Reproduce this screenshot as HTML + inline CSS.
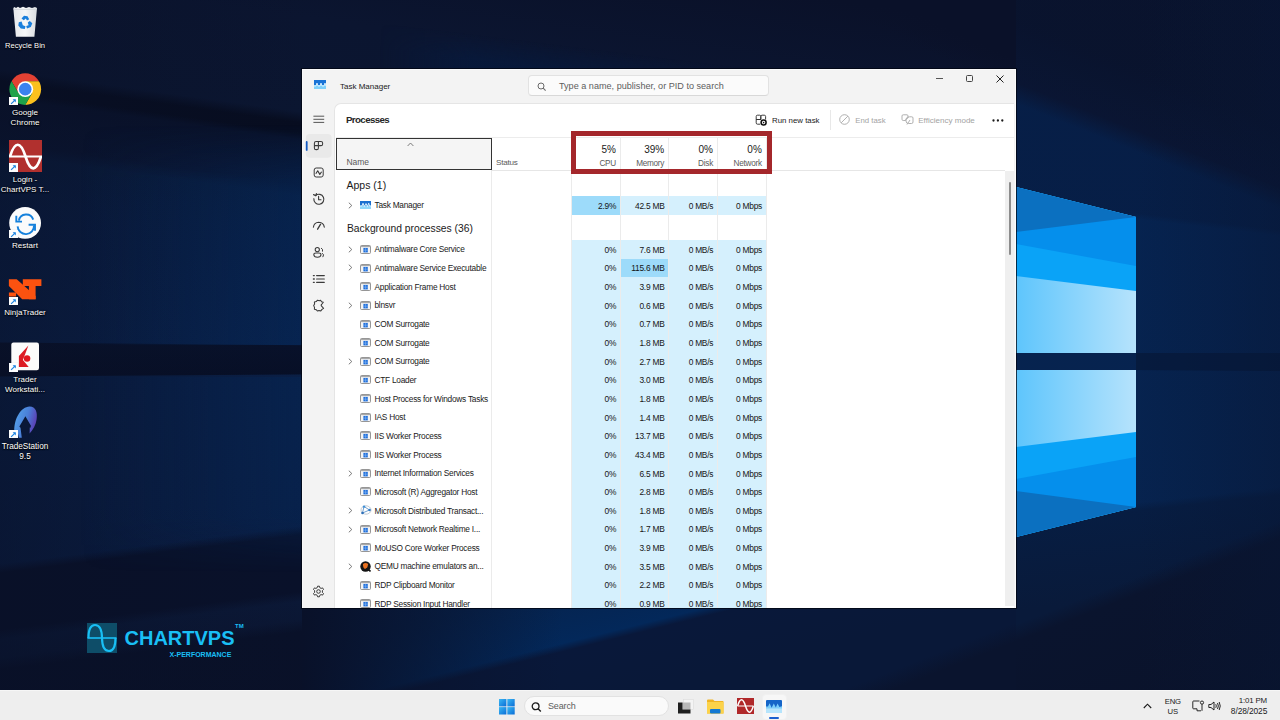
<!DOCTYPE html>
<html><head><meta charset="utf-8"><style>
*{margin:0;padding:0;box-sizing:border-box}
html,body{width:1280px;height:720px;overflow:hidden;background:#0a1430;font-family:"Liberation Sans",sans-serif}
.a{position:absolute;white-space:nowrap}
.dl{position:absolute;color:#fff;font-size:8px;text-align:center;width:60px;line-height:10px;text-shadow:0 0 2px rgba(0,0,0,.9),0 1px 1px #000}
.nm{position:absolute;font-size:8.3px;line-height:10px;color:#1a1a1a;white-space:nowrap;letter-spacing:-0.24px}
.c{position:absolute;font-size:8.4px;line-height:10px;text-align:right;color:#151515;white-space:nowrap;letter-spacing:-0.25px}
.hl{position:absolute}
</style></head>
<body>
<div class="a" style="left:0;top:0;width:1280px;height:690px;background:#0a1229"></div>
<div class="a" style="left:0px;top:0px;width:1016px;height:690px;background:linear-gradient(-172.082deg,#0a1129 25.1px,#0b1530 115.1px,#0b1631 209.1px,#070d20 220.1px,#070d20 230.1px,#09122b 237.1px,#0a1531 281.1px,#0a1c3d 293.1px,rgba(10,30,68,1) 385.1px,rgba(10,32,72,0) 465.1px)"></div>
<div class="a" style="left:0px;top:0px;width:1016px;height:690px;background:linear-gradient(-179.492deg,rgba(10,30,68,0) -248.0px,rgba(10,30,68,0) 182.0px,rgba(10,30,68,1) 262.0px,#0a2048 351.0px,#08112a 352.0px,#070f26 385.0px,rgba(7,15,38,0) 386.0px)"></div>
<div class="a" style="left:0px;top:0px;width:1016px;height:690px;background:linear-gradient(179.605deg,rgba(10,31,70,0) 376.0px,#0a1f46 377.0px,#0a1c40 677.0px)"></div>
<div class="a" style="left:0px;top:450px;width:302px;height:240px;background:linear-gradient(172.405deg,rgba(10,24,56,0) -176.1px,rgba(10,24,56,0) 120.9px,#0a1838 126.9px,#0a1735 163.9px)"></div>
<div class="a" style="left:0px;top:450px;width:302px;height:240px;background:linear-gradient(172.781deg,rgba(8,16,40,0) 113.1px,#09112a 122.1px,#09112a 178.1px,#0b1836 188.1px,#0b1734 206.1px,#091129 218.1px,#0a1128 316.1px)"></div>
<div class="a" style="left:0;top:0;width:310px;height:690px;background:linear-gradient(90deg,rgba(9,16,38,0.5) 0px,rgba(9,16,38,0.25) 150px,rgba(9,16,38,0) 310px)"></div>
<div class="a" style="left:0;top:110px;width:302px;height:235px;background:linear-gradient(90deg,rgba(4,42,92,0) 80px,rgba(4,42,92,0.45) 302px);-webkit-mask-image:linear-gradient(180deg,transparent 0,transparent 15px,#000 70px);mask-image:linear-gradient(180deg,transparent 0,transparent 15px,#000 70px)"></div>
<div class="a" style="left:0;top:377px;width:302px;height:200px;background:linear-gradient(90deg,rgba(4,42,92,0) 80px,rgba(4,42,92,0.35) 302px);-webkit-mask-image:linear-gradient(180deg,#000 0,#000 140px,transparent 195px);mask-image:linear-gradient(180deg,#000 0,#000 140px,transparent 195px)"></div>
<div class="a" style="left:380px;top:0px;width:636px;height:69px;background:linear-gradient(-172.936deg,rgba(6,28,66,0) 100.9px,rgba(6,28,66,0.55) 125.9px,rgba(6,28,66,0.6) 165.9px);-webkit-mask-image:linear-gradient(90deg,transparent 0,#000 90px);mask-image:linear-gradient(90deg,transparent 0,#000 90px)"></div>
<div class="a" style="left:380px;top:0px;width:636px;height:69px;background:linear-gradient(-154.799deg,#0a1129 -120.8px,#0a1129 54.2px,rgba(10,17,41,0) 84.2px)"></div>
<div class="a" style="left:302px;top:600px;width:714px;height:90px;background:linear-gradient(166.057deg,#0a1d42 -89.1px,#06234e 50.9px,#03285a 104.9px,#09183a 112.9px,#091838 170.9px)"></div>
<div class="a" style="left:302px;top:600px;width:714px;height:90px;background:linear-gradient(158.682deg,rgba(10,20,46,0) 280.3px,#0a142e 298.3px)"></div>
<div class="a" style="left:302px;top:600px;width:714px;height:90px;background:linear-gradient(90deg,rgba(9,17,41,1) 0px,rgba(9,18,43,0.6) 120px,rgba(10,24,56,0) 260px)"></div>
<div class="a" style="left:1016px;top:0px;width:264px;height:690px;background:linear-gradient(-158.311deg,#0a1129 -116.0px,#0a1229 114.0px,#0b1531 174.0px,#062350 194.0px,#07234e 684.0px)"></div>
<div class="a" style="left:1016px;top:0px;width:264px;height:690px;background:linear-gradient(-173.267deg,rgba(8,22,54,0.35) 31.4px,rgba(8,22,54,0.35) 228.4px,rgba(8,22,54,0) 234.4px)"></div>
<div class="a" style="left:1016px;top:0px;width:264px;height:690px;background:linear-gradient(173.660deg,rgba(7,27,64,0) 513.2px,#071d42 521.2px,#091a3a 607.2px)"></div>
<div class="a" style="left:1016px;top:0px;width:264px;height:690px;background:linear-gradient(158.682deg,rgba(10,18,41,0) 569.7px,rgba(10,18,41,0) 581.7px,#0a142e 597.7px,#0a1229 789.7px)"></div>
<div class="a" style="left:1016px;top:0;width:264px;height:690px;background:linear-gradient(90deg,rgba(6,20,50,0) 0,rgba(6,20,50,0) 120px,rgba(8,22,52,0.45) 264px)"></div>
<svg class="a" style="left:0;top:0" width="1280" height="720" viewBox="0 0 1280 720">
 <defs>
  <linearGradient id="paneT" x1="0" y1="0" x2="1" y2="0">
   <stop offset="0" stop-color="#5ec5fc"/>
   <stop offset="1" stop-color="#b6e3fc"/>
  </linearGradient>
 </defs>
 <polygon points="1136,353 1280,353 1280,371 1136,370" fill="#061533" opacity="0.6"/>
 <polygon points="1016,187 1136,217 1136,353 1016,353" fill="url(#paneT)"/>
 <polygon points="1016,187 1136,217 1136,291 1016,276" fill="#0aa3f7"/>
 <polygon points="1016,187 1136,217 1136,266 1016,244" fill="#058fec"/>
 <polygon points="1016,187 1136,217 1016,232" fill="#0b70c0"/>
 <polygon points="1016,370 1136,370 1136,507 1016,537" fill="url(#paneT)"/>
 <polygon points="1016,447 1136,432 1136,507 1016,537" fill="#0aa3f7"/>
 <polygon points="1016,479 1136,457 1136,507 1016,537" fill="#058fec"/>
 <polygon points="1016,491 1136,507 1016,537" fill="#0b70c0"/>
</svg>
<!-- Recycle bin -->
<svg class="a" style="left:0;top:0" width="50" height="40" viewBox="0 0 50 40">
 <defs><linearGradient id="rbg" x1="0" y1="0" x2="1" y2="0"><stop offset="0" stop-color="#e6e9ec"/><stop offset="0.5" stop-color="#f6f7f8"/><stop offset="1" stop-color="#d8dce0"/></linearGradient></defs>
 <path d="M13.3 8 L14.5 7 L16 8 L18 6.8 L20 8 L23 6.8 L26 8 L29 7 L32 8 L35 7 L37 8 L34.4 36.8 L15.9 36.8 Z" fill="url(#rbg)"/>
 <path d="M13.5 9.5 H36.8" stroke="#c9ced3" stroke-width="0.6"/>
 <g fill="#1a7fdc">
  <path d="M21.5 18.5 L24 15.8 L27.5 16.2 L29.2 19.2 L27 20.6 L25.8 18.4 L23.8 20.3 Z"/>
  <path d="M29.8 21 L32.3 23.2 L30.8 27 L27 28.6 L26.2 26 L28.6 25.2 L27.8 22.6 Z"/>
  <path d="M18.8 22.2 L21.6 21.5 L22.8 25.2 L25.5 26.2 L24.8 29 L20.8 28.6 L18.3 25.5 Z"/>
 </g>
</svg>
<div class="dl" style="left:-5px;top:40.5px;font-size:7.6px">Recycle Bin</div>

<!-- Chrome -->
<svg class="a" style="left:9px;top:73px" width="33" height="33" viewBox="0 0 33 33">
 <defs><clipPath id="chc"><circle cx="16.25" cy="16.15" r="15.85"/></clipPath></defs>
 <g clip-path="url(#chc)">
  <polygon points="9.41,20.10 -10.59,-14.54 -23.75,-23.85 56.25,-23.85 56.25,8.25 16.25,8.25 16.25,16.15" fill="#e34133"/>
  <polygon points="16.25,8.25 56.25,8.25 56.25,56.15 3.09,54.74 23.09,20.10 16.25,16.15" fill="#fbc11d"/>
  <polygon points="23.09,20.10 3.09,54.74 -23.75,56.15 -10.59,-14.54 9.41,20.10 16.25,16.15" fill="#1fa34a"/>
 </g>
 <circle cx="16.25" cy="16.15" r="7.9" fill="#fff"/>
 <circle cx="16.25" cy="16.15" r="6.3" fill="#3b82ee"/>
</svg>
<div class="a" style="left:9.4px;top:96.6px;width:8.5px;height:8.4px;background:#fdfdfd;box-shadow:0 0 0.6px rgba(0,0,0,.4)"></div>
<svg class="a" style="left:10.2px;top:97.5px" width="7" height="7" viewBox="0 0 7 7"><path d="M1.1 5.9 L5.2 1.8" stroke="#1b83e0" stroke-width="1.15"/><path d="M2.6 1.2 H5.8 V4.4 Z" fill="#1b83e0"/></svg>
<div class="dl" style="left:-5px;top:107.5px;font-size:8.1px">Google<br>Chrome</div>

<!-- ChartVPS login -->
<svg class="a" style="left:9px;top:140px" width="33" height="32" viewBox="0 0 33 32">
 <rect width="33" height="32" fill="#b1302e"/>
 <path d="M1 16.5 C5.8 0.8 11.6 0.8 16.5 16.5 C21.4 32.2 27.2 32.2 32 16.5" stroke="#fff" stroke-width="2.7" fill="none"/>
 <path d="M0 16.5 H33" stroke="#fff" stroke-width="1.8"/>
</svg>
<div class="a" style="left:9.2px;top:163.3px;width:8.5px;height:8.4px;background:#fdfdfd;box-shadow:0 0 0.6px rgba(0,0,0,.4)"></div>
<svg class="a" style="left:10.0px;top:164.2px" width="7" height="7" viewBox="0 0 7 7"><path d="M1.1 5.9 L5.2 1.8" stroke="#1b83e0" stroke-width="1.15"/><path d="M2.6 1.2 H5.8 V4.4 Z" fill="#1b83e0"/></svg>
<div class="dl" style="left:-5px;top:174.5px;font-size:8px">Login -<br>ChartVPS T...</div>

<!-- Restart -->
<svg class="a" style="left:9px;top:206.5px" width="33" height="33" viewBox="0 0 33 33">
 <circle cx="16.1" cy="15.9" r="15.9" fill="#fbfbfb"/>
 <g stroke="#1581dc" stroke-width="1.9" fill="none" stroke-linecap="butt">
  <path d="M9.9 13.6 A7.4 7.4 0 0 1 24.2 12.6"/>
  <path d="M7.3 8.8 V14.6 H13"/>
  <path d="M8.6 19.4 A7.4 7.4 0 0 0 25 18.4"/>
  <path d="M19.6 17.7 H26 V23.8"/>
 </g>
</svg>
<div class="a" style="left:9.2px;top:230px;width:8.5px;height:8.4px;background:#fdfdfd;box-shadow:0 0 0.6px rgba(0,0,0,.4)"></div>
<svg class="a" style="left:10.0px;top:230.9px" width="7" height="7" viewBox="0 0 7 7"><path d="M1.1 5.9 L5.2 1.8" stroke="#1b83e0" stroke-width="1.15"/><path d="M2.6 1.2 H5.8 V4.4 Z" fill="#1b83e0"/></svg>
<div class="dl" style="left:-5px;top:240.5px;font-size:8px">Restart</div>

<!-- NinjaTrader -->
<svg class="a" style="left:0;top:270px" width="50" height="40" viewBox="0 270 50 40">
 <g fill="#fb5210">
  <polygon points="8.9,279.2 16.7,279.2 35.6,296.1 35.6,299.2 22.2,299.2 8.9,286.1"/>
  <polygon points="22.8,279.2 41.4,279.2 41.4,286.1 35.6,286.1 35.6,299.2 28.9,299.2 28.9,286.1 22.8,286.1"/>
  <rect x="8.9" y="292.5" width="7.2" height="4"/>
 </g>
</svg>
<div class="a" style="left:9px;top:296.7px;width:8.5px;height:8.4px;background:#fdfdfd;box-shadow:0 0 0.6px rgba(0,0,0,.4)"></div>
<svg class="a" style="left:9.8px;top:297.6px" width="7" height="7" viewBox="0 0 7 7"><path d="M1.1 5.9 L5.2 1.8" stroke="#1b83e0" stroke-width="1.15"/><path d="M2.6 1.2 H5.8 V4.4 Z" fill="#1b83e0"/></svg>
<div class="dl" style="left:-5px;top:307.5px;font-size:8px">NinjaTrader</div>

<!-- Trader Workstation -->
<svg class="a" style="left:11px;top:341.5px" width="29" height="29" viewBox="0 0 29 29">
 <rect x="0.3" y="0.5" width="27.7" height="27.7" rx="2.2" fill="#fbfbfb"/>
 <polygon points="17.4,3.4 7.9,13.9 7.9,25 17.7,25 11.9,18.1" fill="#dc1b24"/>
 <circle cx="16.1" cy="16.5" r="3.2" fill="#e0141e"/>
</svg>
<div class="a" style="left:9.4px;top:363.3px;width:8.5px;height:8.4px;background:#fdfdfd;box-shadow:0 0 0.6px rgba(0,0,0,.4)"></div>
<svg class="a" style="left:10.2px;top:364.2px" width="7" height="7" viewBox="0 0 7 7"><path d="M1.1 5.9 L5.2 1.8" stroke="#1b83e0" stroke-width="1.15"/><path d="M2.6 1.2 H5.8 V4.4 Z" fill="#1b83e0"/></svg>
<div class="dl" style="left:-5px;top:374.5px;font-size:8px">Trader<br>Workstati...</div>

<!-- TradeStation -->
<svg class="a" style="left:0;top:400px" width="50" height="42" viewBox="0 400 50 42">
 <defs><linearGradient id="ts" x1="0" y1="0" x2="1" y2="0.4"><stop offset="0" stop-color="#56a9ef"/><stop offset="0.6" stop-color="#4a7fd8"/><stop offset="1" stop-color="#5b3fb4"/></linearGradient></defs>
 <path d="M14.3 431.5 C14 418 21 407 29.5 406.5 C35.5 406.3 37.8 412 36.6 419.5 C35.8 425 33 430 29.6 433.5 L29.8 427 L31.2 426.2 L25.4 416.2 L19.2 426.8 L20.4 427 L21.8 437.8 L18.8 437.8 L17.6 431.5 Z" fill="url(#ts)"/>
 <path d="M25.4 418.5 L19.8 427.5 L22 427.5 L22 441 L28.8 441 L28.8 427.5 L31 427.5 Z" fill="#0a1838"/>
</svg>
<div class="a" style="left:9.3px;top:430px;width:8.5px;height:8.4px;background:#fdfdfd;box-shadow:0 0 0.6px rgba(0,0,0,.4)"></div>
<svg class="a" style="left:10.1px;top:430.9px" width="7" height="7" viewBox="0 0 7 7"><path d="M1.1 5.9 L5.2 1.8" stroke="#1b83e0" stroke-width="1.15"/><path d="M2.6 1.2 H5.8 V4.4 Z" fill="#1b83e0"/></svg>
<div class="dl" style="left:-5px;top:441.5px;font-size:8.2px">TradeStation<br>9.5</div>

<!-- ChartVPS logo -->
<svg class="a" style="left:87px;top:623px" width="30" height="30" viewBox="0 0 30 30">
 <rect width="30" height="30" fill="#0e4d68"/>
 <path d="M1.5 15 Q1.5 2 8 2 Q14.8 2 15 15 Q15.2 28 22 28 Q28.5 28 28.5 15" stroke="#19bff5" stroke-width="2.2" fill="none"/>
 <path d="M0.5 15 H29.5" stroke="#19bff5" stroke-width="1.6"/>
</svg>
<div class="a" style="left:124.5px;top:626px;font-size:20px;line-height:24px;font-weight:bold;color:#19bff5;letter-spacing:0px">CHARTVPS</div>
<div class="a" style="left:235px;top:623px;font-size:6px;line-height:7px;font-weight:bold;color:#19bff5">TM</div>
<div class="a" style="left:169.5px;top:650.5px;font-size:7px;line-height:8px;font-weight:bold;color:#19bff5">X-PERFORMANCE</div>

<div style="position:absolute;left:0;top:0;width:1280px;height:608px;overflow:hidden">
<div class="a" style="left:302px;top:69px;width:714px;height:539px;background:#f3f3f3;border-left:1px solid #f7f7f7;border-right:1px solid #fafafa;border-top:1px solid #fafafa;box-shadow:0 0 0 1px rgba(0,4,16,0.75)"></div><div class="a" style="left:334px;top:103px;width:680px;height:505px;background:#fff;border-top-left-radius:7px;border-left:1px solid #e5e5e5;border-top:1px solid #e5e5e5"></div><svg class="a" style="left:314px;top:80px" width="12" height="9" viewBox="0 0 12 9">
<rect x="0" y="0" width="12" height="9" fill="#1a73d6"/>
<rect x="0" y="5" width="12" height="4" fill="#7fd0fb"/>
<path d="M0 6 L2 6 L3 3 L4 6 L6 6 L7 3 L8 6 L10 6 L11 3 L12 6" stroke="#dff4ff" stroke-width="0.9" fill="none"/>
</svg><div class="a" style="left:340px;top:82px;font-size:8px;line-height:10px;color:#1a1a1a">Task Manager</div><div class="a" style="left:528px;top:75px;width:241px;height:21px;background:#fbfbfb;border:1px solid #e2e2e2;border-bottom-color:#d8d8d8;border-radius:4px"></div><svg class="a" style="left:537px;top:82px" width="10" height="10" viewBox="0 0 10 10">
<circle cx="4" cy="4" r="3" stroke="#6a6a6a" stroke-width="1" fill="none"/><path d="M6.2 6.2 L8.6 8.6" stroke="#6a6a6a" stroke-width="1.1"/></svg><div class="a" style="left:559px;top:80.5px;font-size:9.1px;line-height:11px;color:#5d5d5d">Type a name, publisher, or PID to search</div><div class="a" style="left:936px;top:78px;width:7px;height:1px;background:#555"></div><div class="a" style="left:966px;top:75px;width:7px;height:7px;border:1px solid #444;border-radius:1.5px"></div><svg class="a" style="left:996px;top:75px" width="8" height="8" viewBox="0 0 8 8"><path d="M0.5 0.5 L7.5 7.5 M7.5 0.5 L0.5 7.5" stroke="#222" stroke-width="1"/></svg><svg class="a" style="left:305px;top:108px" width="28" height="210" viewBox="305 108 28 210">
 <g stroke="#4d4d4d" stroke-width="0.95" fill="none" stroke-linecap="round">
  <!-- hamburger -->
  <path d="M313.8 116.2 H323.8 M313.8 119.3 H323.8 M313.8 122.4 H323.8"/>
 </g>
 <rect x="305.8" y="134" width="25.8" height="23.8" rx="4" fill="#e9e9e9"/>
 <rect x="305.8" y="141" width="1.8" height="9.8" rx="0.9" fill="#1259c3"/>
 <g stroke="#3a3a3a" stroke-width="1" fill="none" stroke-linejoin="round">
  <!-- processes -->
  <path d="M314.4 143.2 Q314.4 141.5 316.1 141.5 H321 Q322.6 141.5 322.6 143.1 V143.9 Q322.6 145.6 321 145.6 H318.4 V147.9 Q318.4 149.6 316.7 149.6 H316.1 Q314.4 149.6 314.4 147.9 Z" stroke-width="1.05"/>
  <path d="M314.4 145.6 H318.4 M318.4 141.5 V145.6" stroke-width="1.05"/>
  <!-- performance -->
  <rect x="314.2" y="168" width="9" height="9" rx="2"/>
  <path d="M315.8 173.8 L317.7 170.8 L319.8 174.4 L321.6 171.8" stroke-width="1.1"/>
 </g>
 <g stroke="#3a3a3a" stroke-width="1" fill="none" stroke-linecap="round" stroke-linejoin="round">
  <!-- app history -->
  <path d="M313.9 198.7 A5 5 0 1 0 315.6 195.5" stroke-width="1.15"/>
  <path d="M313.6 194.6 L315.8 195.8 L316.4 193.6" stroke-width="1.2"/>
  <path d="M318.6 196.4 V199.8 H321" stroke-width="1.1"/>
  <!-- startup (gauge) -->
  <path d="M313.4 227.2 Q314 222.3 318.8 222.2 Q323.6 222.3 324.3 227.2" stroke-width="1.1"/>
  <path d="M320.6 224.2 L317.6 229.2" stroke-width="1.3"/>
  <!-- users -->
  <circle cx="317.3" cy="249.6" r="2.1" stroke-width="1.05"/>
  <path d="M313.8 254.8 Q313.8 253 316 253 H318.8 Q321 253 321 254.8 Q320.8 257.2 317.4 257.2 Q314 257.2 313.8 254.8 Z" stroke-width="1.05"/>
  <path d="M321.4 248.2 Q323.2 249 322.6 251.2" stroke-width="1"/>
  <path d="M322.6 253.4 Q324.6 254.5 323 256.8" stroke-width="1"/>
  <!-- details (list) -->
  <path d="M316.6 275.6 H324.3 M316.6 279 H324.3 M316.6 282.3 H324.3" stroke-width="1.2"/>
  <path d="M313.4 275.6 H314.3 M313.4 279 H314.3 M313.4 282.3 H314.3" stroke-width="1.3"/>
  <!-- services -->
  <path d="M317.5 300.2 L319.3 300.8 L320.6 300.3 L321.5 301.8 L323.3 302.3 L321.6 304.5 Q320.7 305.3 321.6 306.2 L323.6 308.4 L322 309.4 L320.8 310.9 L319 310.5 L317.4 311 L316.2 309.7 L314.4 309.2 L314.5 307.4 L313.7 305.6 L314.6 304 L314.4 302.1 L316.2 301.6 Z" stroke-width="1.05"/>
 </g>
</svg>
<svg class="a" style="left:312px;top:585px" width="13" height="13" viewBox="0 0 13 13">
 <g fill="none" stroke="#3a3a3a" stroke-width="1">
  <circle cx="6.5" cy="6.5" r="1.8"/>
  <path d="M5.6 1.2 H7.4 L7.8 2.7 L9.1 3.4 L10.6 2.9 L11.5 4.5 L10.4 5.6 V7.4 L11.5 8.5 L10.6 10.1 L9.1 9.6 L7.8 10.3 L7.4 11.8 H5.6 L5.2 10.3 L3.9 9.6 L2.4 10.1 L1.5 8.5 L2.6 7.4 V5.6 L1.5 4.5 L2.4 2.9 L3.9 3.4 L5.2 2.7 Z" stroke-linejoin="round"/>
 </g>
</svg>
<div class="a" style="left:346px;top:114px;font-size:9.7px;line-height:11px;color:#262626;font-weight:bold;letter-spacing:-0.6px">Processes</div><svg class="a" style="left:755px;top:114px" width="13" height="12" viewBox="0 0 13 12">
 <g fill="none" stroke="#333" stroke-width="0.95">
  <path d="M1.2 5.5 V2.5 Q1.2 1.2 2.5 1.2 H4.7 Q5.8 1.2 5.8 2.5 V5.5 Z"/>
  <path d="M5.8 5.5 V2.5 Q5.8 1.2 7.1 1.2 H9.3 Q10.6 1.2 10.6 2.5 V5.5"/>
  <path d="M1.2 5.5 V8.8 Q1.2 10.2 2.5 10.2 H5.2"/>
  <path d="M1.2 5.5 H5.8"/>
 </g>
 <circle cx="8.6" cy="8.6" r="2.5" fill="#fff" stroke="#111" stroke-width="1.5"/>
 <circle cx="8.6" cy="8.6" r="0.8" fill="#111"/>
</svg>
<div class="a" style="left:772px;top:116px;font-size:7.85px;line-height:10px;color:#1a1a1a">Run new task</div>
<div class="a" style="left:829.5px;top:110px;width:1px;height:20px;background:#e8e8e8"></div>
<svg class="a" style="left:838.5px;top:114px" width="11" height="11" viewBox="0 0 11 11">
 <circle cx="5.5" cy="5.5" r="4.8" fill="none" stroke="#a8a8a8" stroke-width="0.9"/>
 <path d="M2.2 8.8 L8.8 2.2" stroke="#a8a8a8" stroke-width="0.9"/>
</svg>
<div class="a" style="left:855.3px;top:116px;font-size:7.8px;line-height:10px;color:#a3a3a3">End task</div>
<svg class="a" style="left:901px;top:114px" width="13" height="11" viewBox="0 0 13 11">
 <g fill="none" stroke="#a8a8a8" stroke-width="0.9" stroke-linejoin="round">
  <path d="M1 2 Q1 0.8 2.2 0.8 H6 Q7 0.8 7 2 V4 Q5 4.5 4.5 6.5 H2.2 Q1 6.5 1 5.3 Z"/>
  <path d="M5 5 Q5.5 2.8 8.5 2.8 H10.8 Q12 2.8 12 4 V8 Q12 9.5 10.5 9.5 H7.5 Q5 9.5 5 7 Z"/>
  <path d="M6 10.5 L9 6"/>
 </g>
</svg>
<div class="a" style="left:918.2px;top:116px;font-size:8.05px;line-height:10px;color:#a3a3a3">Efficiency mode</div>
<svg class="a" style="left:992px;top:119px" width="12" height="3" viewBox="0 0 12 3">
 <circle cx="1.5" cy="1.5" r="1.15" fill="#1a1a1a"/><circle cx="5.9" cy="1.5" r="1.15" fill="#1a1a1a"/><circle cx="10.3" cy="1.5" r="1.15" fill="#1a1a1a"/>
</svg>
<div class="a" style="left:336px;top:137px;width:678px;height:1px;background:#ececec"></div><div class="a" style="left:491px;top:170px;width:514px;height:1px;background:#e6e6e6"></div><div class="a" style="left:336px;top:138px;width:156px;height:32px;background:#f5f5f5;border:1.5px solid #333"></div><svg class="a" style="left:407px;top:142px" width="7" height="5" viewBox="0 0 7 5"><path d="M0.6 4 L3.5 1 L6.4 4" stroke="#6d6d6d" stroke-width="0.9" fill="none"/></svg><div class="a" style="left:346.5px;top:156.8px;font-size:8.5px;line-height:10px;color:#5a5a5a;letter-spacing:-0.1px">Name</div><div class="a" style="left:496px;top:158.2px;font-size:8.1px;line-height:10px;color:#5a5a5a;letter-spacing:-0.25px">Status</div><div class="a" style="right:664.0px;top:143.5px;font-size:10px;line-height:12px;color:#1a1a1a;text-align:right">5%</div><div class="a" style="right:664.0px;top:158.6px;font-size:8.2px;line-height:10px;color:#5a5a5a;text-align:right;letter-spacing:-0.25px">CPU</div><div class="a" style="right:615.8px;top:143.5px;font-size:10px;line-height:12px;color:#1a1a1a;text-align:right">39%</div><div class="a" style="right:615.8px;top:158.6px;font-size:8.2px;line-height:10px;color:#5a5a5a;text-align:right;letter-spacing:-0.25px">Memory</div><div class="a" style="right:567.0px;top:143.5px;font-size:10px;line-height:12px;color:#1a1a1a;text-align:right">0%</div><div class="a" style="right:567.0px;top:158.6px;font-size:8.2px;line-height:10px;color:#5a5a5a;text-align:right;letter-spacing:-0.25px">Disk</div><div class="a" style="right:518.2px;top:143.5px;font-size:10px;line-height:12px;color:#1a1a1a;text-align:right">0%</div><div class="a" style="right:518.2px;top:158.6px;font-size:8.2px;line-height:10px;color:#5a5a5a;text-align:right;letter-spacing:-0.25px">Network</div><div class="a" style="left:491.1px;top:171px;width:1px;height:437px;background:#ebebeb"></div><div class="a" style="left:571.2px;top:171px;width:1px;height:437px;background:#ebebeb"></div><div class="a" style="left:620.0px;top:138px;width:1px;height:470px;background:#ebebeb"></div><div class="a" style="left:668.2px;top:138px;width:1px;height:470px;background:#ebebeb"></div><div class="a" style="left:717.0px;top:138px;width:1px;height:470px;background:#ebebeb"></div><div class="a" style="left:765.8px;top:138px;width:1px;height:470px;background:#ebebeb"></div><div class="a" style="left:346.5px;top:179px;font-size:10.5px;line-height:12px;color:#1a1a1a">Apps (1)</div><div class="a" style="left:572.2px;top:196px;width:47.8px;height:19px;background:#9ddbfa"></div><div class="c" style="right:663.8px;top:200.72px">2.9%</div><div class="a" style="left:621.0px;top:196px;width:47.2px;height:19px;background:#d5f0fd"></div><div class="c" style="right:615.5px;top:200.72px">42.5 MB</div><div class="a" style="left:669.2px;top:196px;width:47.8px;height:19px;background:#d5f0fd"></div><div class="c" style="right:566.8px;top:200.72px">0 MB/s</div><div class="a" style="left:718.0px;top:196px;width:47.8px;height:19px;background:#d5f0fd"></div><div class="c" style="right:518.0px;top:200.72px">0 Mbps</div><svg class="a" style="left:348px;top:201.82px" width="5" height="7" viewBox="0 0 5 7"><path d="M0.8 0.7 L3.8 3.5 L0.8 6.3" stroke="#6a6a6a" stroke-width="0.9" fill="none"/></svg><svg class="a" style="left:360px;top:201.32px" width="11" height="8" viewBox="0 0 11 8"><rect width="11" height="8" fill="#1a6fd0"/><rect y="4.6" width="11" height="3.4" fill="#8fd6fb"/><path d="M0 5 L2 5 L3 2.2 L4.3 5.5 L6 2.5 L7.5 5.5 L8.7 2.2 L9.6 5 L11 5" stroke="#e6f6ff" stroke-width="0.9" fill="none"/></svg><div class="nm" style="left:374.5px;top:200.42px">Task Manager</div><div class="a" style="left:347px;top:223px;font-size:10.3px;line-height:12px;color:#1a1a1a">Background processes (36)</div><div class="a" style="left:572.2px;top:240px;width:47.8px;height:19px;background:#d5f0fd"></div><div class="c" style="right:663.8px;top:244.72px">0%</div><div class="a" style="left:621.0px;top:240px;width:47.2px;height:19px;background:#d5f0fd"></div><div class="c" style="right:615.5px;top:244.72px">7.6 MB</div><div class="a" style="left:669.2px;top:240px;width:47.8px;height:19px;background:#d5f0fd"></div><div class="c" style="right:566.8px;top:244.72px">0 MB/s</div><div class="a" style="left:718.0px;top:240px;width:47.8px;height:19px;background:#d5f0fd"></div><div class="c" style="right:518.0px;top:244.72px">0 Mbps</div><svg class="a" style="left:348px;top:245.82px" width="5" height="7" viewBox="0 0 5 7"><path d="M0.8 0.7 L3.8 3.5 L0.8 6.3" stroke="#6a6a6a" stroke-width="0.9" fill="none"/></svg><svg class="a" style="left:359.5px;top:244.92px" width="11" height="9" viewBox="0 0 11 9"><rect x="0.5" y="0.5" width="10" height="8" rx="1" fill="#f4f4f4" stroke="#8a8a8a" stroke-width="0.9"/><rect x="1" y="1" width="9" height="1.1" fill="#a8a8a8"/><rect x="3.4" y="2.9" width="4.4" height="4.5" fill="#1f6fdc"/><path d="M5.6 2.9 V7.4 M3.4 5.15 H7.8" stroke="#9cc4f2" stroke-width="0.5"/></svg><div class="nm" style="left:374.5px;top:244.42px">Antimalware Core Service</div><div class="a" style="left:572.2px;top:259px;width:47.8px;height:18px;background:#d5f0fd"></div><div class="c" style="right:663.8px;top:263.37px">0%</div><div class="a" style="left:621.0px;top:259px;width:47.2px;height:18px;background:#9ddbfa"></div><div class="c" style="right:615.5px;top:263.37px">115.6 MB</div><div class="a" style="left:669.2px;top:259px;width:47.8px;height:18px;background:#d5f0fd"></div><div class="c" style="right:566.8px;top:263.37px">0 MB/s</div><div class="a" style="left:718.0px;top:259px;width:47.8px;height:18px;background:#d5f0fd"></div><div class="c" style="right:518.0px;top:263.37px">0 Mbps</div><svg class="a" style="left:348px;top:264.47px" width="5" height="7" viewBox="0 0 5 7"><path d="M0.8 0.7 L3.8 3.5 L0.8 6.3" stroke="#6a6a6a" stroke-width="0.9" fill="none"/></svg><svg class="a" style="left:359.5px;top:263.57px" width="11" height="9" viewBox="0 0 11 9"><rect x="0.5" y="0.5" width="10" height="8" rx="1" fill="#f4f4f4" stroke="#8a8a8a" stroke-width="0.9"/><rect x="1" y="1" width="9" height="1.1" fill="#a8a8a8"/><rect x="3.4" y="2.9" width="4.4" height="4.5" fill="#1f6fdc"/><path d="M5.6 2.9 V7.4 M3.4 5.15 H7.8" stroke="#9cc4f2" stroke-width="0.5"/></svg><div class="nm" style="left:374.5px;top:263.07px">Antimalware Service Executable</div><div class="a" style="left:572.2px;top:277px;width:47.8px;height:19px;background:#d5f0fd"></div><div class="c" style="right:663.8px;top:282.02px">0%</div><div class="a" style="left:621.0px;top:277px;width:47.2px;height:19px;background:#d5f0fd"></div><div class="c" style="right:615.5px;top:282.02px">3.9 MB</div><div class="a" style="left:669.2px;top:277px;width:47.8px;height:19px;background:#d5f0fd"></div><div class="c" style="right:566.8px;top:282.02px">0 MB/s</div><div class="a" style="left:718.0px;top:277px;width:47.8px;height:19px;background:#d5f0fd"></div><div class="c" style="right:518.0px;top:282.02px">0 Mbps</div><svg class="a" style="left:359.5px;top:282.23px" width="11" height="9" viewBox="0 0 11 9"><rect x="0.5" y="0.5" width="10" height="8" rx="1" fill="#f4f4f4" stroke="#8a8a8a" stroke-width="0.9"/><rect x="1" y="1" width="9" height="1.1" fill="#a8a8a8"/><rect x="3.4" y="2.9" width="4.4" height="4.5" fill="#1f6fdc"/><path d="M5.6 2.9 V7.4 M3.4 5.15 H7.8" stroke="#9cc4f2" stroke-width="0.5"/></svg><div class="nm" style="left:374.5px;top:281.73px">Application Frame Host</div><div class="a" style="left:572.2px;top:296px;width:47.8px;height:19px;background:#d5f0fd"></div><div class="c" style="right:663.8px;top:300.67px">0%</div><div class="a" style="left:621.0px;top:296px;width:47.2px;height:19px;background:#d5f0fd"></div><div class="c" style="right:615.5px;top:300.67px">0.6 MB</div><div class="a" style="left:669.2px;top:296px;width:47.8px;height:19px;background:#d5f0fd"></div><div class="c" style="right:566.8px;top:300.67px">0 MB/s</div><div class="a" style="left:718.0px;top:296px;width:47.8px;height:19px;background:#d5f0fd"></div><div class="c" style="right:518.0px;top:300.67px">0 Mbps</div><svg class="a" style="left:348px;top:301.77px" width="5" height="7" viewBox="0 0 5 7"><path d="M0.8 0.7 L3.8 3.5 L0.8 6.3" stroke="#6a6a6a" stroke-width="0.9" fill="none"/></svg><svg class="a" style="left:359.5px;top:300.88px" width="11" height="9" viewBox="0 0 11 9"><rect x="0.5" y="0.5" width="10" height="8" rx="1" fill="#f4f4f4" stroke="#8a8a8a" stroke-width="0.9"/><rect x="1" y="1" width="9" height="1.1" fill="#a8a8a8"/><rect x="3.4" y="2.9" width="4.4" height="4.5" fill="#1f6fdc"/><path d="M5.6 2.9 V7.4 M3.4 5.15 H7.8" stroke="#9cc4f2" stroke-width="0.5"/></svg><div class="nm" style="left:374.5px;top:300.38px">blnsvr</div><div class="a" style="left:572.2px;top:315px;width:47.8px;height:18px;background:#d5f0fd"></div><div class="c" style="right:663.8px;top:319.32px">0%</div><div class="a" style="left:621.0px;top:315px;width:47.2px;height:18px;background:#d5f0fd"></div><div class="c" style="right:615.5px;top:319.32px">0.7 MB</div><div class="a" style="left:669.2px;top:315px;width:47.8px;height:18px;background:#d5f0fd"></div><div class="c" style="right:566.8px;top:319.32px">0 MB/s</div><div class="a" style="left:718.0px;top:315px;width:47.8px;height:18px;background:#d5f0fd"></div><div class="c" style="right:518.0px;top:319.32px">0 Mbps</div><svg class="a" style="left:359.5px;top:319.53px" width="11" height="9" viewBox="0 0 11 9"><rect x="0.5" y="0.5" width="10" height="8" rx="1" fill="#f4f4f4" stroke="#8a8a8a" stroke-width="0.9"/><rect x="1" y="1" width="9" height="1.1" fill="#a8a8a8"/><rect x="3.4" y="2.9" width="4.4" height="4.5" fill="#1f6fdc"/><path d="M5.6 2.9 V7.4 M3.4 5.15 H7.8" stroke="#9cc4f2" stroke-width="0.5"/></svg><div class="nm" style="left:374.5px;top:319.03px">COM Surrogate</div><div class="a" style="left:572.2px;top:333px;width:47.8px;height:19px;background:#d5f0fd"></div><div class="c" style="right:663.8px;top:337.97px">0%</div><div class="a" style="left:621.0px;top:333px;width:47.2px;height:19px;background:#d5f0fd"></div><div class="c" style="right:615.5px;top:337.97px">1.8 MB</div><div class="a" style="left:669.2px;top:333px;width:47.8px;height:19px;background:#d5f0fd"></div><div class="c" style="right:566.8px;top:337.97px">0 MB/s</div><div class="a" style="left:718.0px;top:333px;width:47.8px;height:19px;background:#d5f0fd"></div><div class="c" style="right:518.0px;top:337.97px">0 Mbps</div><svg class="a" style="left:359.5px;top:338.18px" width="11" height="9" viewBox="0 0 11 9"><rect x="0.5" y="0.5" width="10" height="8" rx="1" fill="#f4f4f4" stroke="#8a8a8a" stroke-width="0.9"/><rect x="1" y="1" width="9" height="1.1" fill="#a8a8a8"/><rect x="3.4" y="2.9" width="4.4" height="4.5" fill="#1f6fdc"/><path d="M5.6 2.9 V7.4 M3.4 5.15 H7.8" stroke="#9cc4f2" stroke-width="0.5"/></svg><div class="nm" style="left:374.5px;top:337.68px">COM Surrogate</div><div class="a" style="left:572.2px;top:352px;width:47.8px;height:19px;background:#d5f0fd"></div><div class="c" style="right:663.8px;top:356.62px">0%</div><div class="a" style="left:621.0px;top:352px;width:47.2px;height:19px;background:#d5f0fd"></div><div class="c" style="right:615.5px;top:356.62px">2.7 MB</div><div class="a" style="left:669.2px;top:352px;width:47.8px;height:19px;background:#d5f0fd"></div><div class="c" style="right:566.8px;top:356.62px">0 MB/s</div><div class="a" style="left:718.0px;top:352px;width:47.8px;height:19px;background:#d5f0fd"></div><div class="c" style="right:518.0px;top:356.62px">0 Mbps</div><svg class="a" style="left:348px;top:357.72px" width="5" height="7" viewBox="0 0 5 7"><path d="M0.8 0.7 L3.8 3.5 L0.8 6.3" stroke="#6a6a6a" stroke-width="0.9" fill="none"/></svg><svg class="a" style="left:359.5px;top:356.82px" width="11" height="9" viewBox="0 0 11 9"><rect x="0.5" y="0.5" width="10" height="8" rx="1" fill="#f4f4f4" stroke="#8a8a8a" stroke-width="0.9"/><rect x="1" y="1" width="9" height="1.1" fill="#a8a8a8"/><rect x="3.4" y="2.9" width="4.4" height="4.5" fill="#1f6fdc"/><path d="M5.6 2.9 V7.4 M3.4 5.15 H7.8" stroke="#9cc4f2" stroke-width="0.5"/></svg><div class="nm" style="left:374.5px;top:356.32px">COM Surrogate</div><div class="a" style="left:572.2px;top:371px;width:47.8px;height:18px;background:#d5f0fd"></div><div class="c" style="right:663.8px;top:375.27px">0%</div><div class="a" style="left:621.0px;top:371px;width:47.2px;height:18px;background:#d5f0fd"></div><div class="c" style="right:615.5px;top:375.27px">3.0 MB</div><div class="a" style="left:669.2px;top:371px;width:47.8px;height:18px;background:#d5f0fd"></div><div class="c" style="right:566.8px;top:375.27px">0 MB/s</div><div class="a" style="left:718.0px;top:371px;width:47.8px;height:18px;background:#d5f0fd"></div><div class="c" style="right:518.0px;top:375.27px">0 Mbps</div><svg class="a" style="left:359.5px;top:375.47px" width="11" height="9" viewBox="0 0 11 9"><rect x="0.5" y="0.5" width="10" height="8" rx="1" fill="#f4f4f4" stroke="#8a8a8a" stroke-width="0.9"/><rect x="1" y="1" width="9" height="1.1" fill="#a8a8a8"/><rect x="3.4" y="2.9" width="4.4" height="4.5" fill="#1f6fdc"/><path d="M5.6 2.9 V7.4 M3.4 5.15 H7.8" stroke="#9cc4f2" stroke-width="0.5"/></svg><div class="nm" style="left:374.5px;top:374.97px">CTF Loader</div><div class="a" style="left:572.2px;top:389px;width:47.8px;height:19px;background:#d5f0fd"></div><div class="c" style="right:663.8px;top:393.92px">0%</div><div class="a" style="left:621.0px;top:389px;width:47.2px;height:19px;background:#d5f0fd"></div><div class="c" style="right:615.5px;top:393.92px">1.8 MB</div><div class="a" style="left:669.2px;top:389px;width:47.8px;height:19px;background:#d5f0fd"></div><div class="c" style="right:566.8px;top:393.92px">0 MB/s</div><div class="a" style="left:718.0px;top:389px;width:47.8px;height:19px;background:#d5f0fd"></div><div class="c" style="right:518.0px;top:393.92px">0 Mbps</div><svg class="a" style="left:359.5px;top:394.12px" width="11" height="9" viewBox="0 0 11 9"><rect x="0.5" y="0.5" width="10" height="8" rx="1" fill="#f4f4f4" stroke="#8a8a8a" stroke-width="0.9"/><rect x="1" y="1" width="9" height="1.1" fill="#a8a8a8"/><rect x="3.4" y="2.9" width="4.4" height="4.5" fill="#1f6fdc"/><path d="M5.6 2.9 V7.4 M3.4 5.15 H7.8" stroke="#9cc4f2" stroke-width="0.5"/></svg><div class="nm" style="left:374.5px;top:393.62px">Host Process for Windows Tasks</div><div class="a" style="left:572.2px;top:408px;width:47.8px;height:18px;background:#d5f0fd"></div><div class="c" style="right:663.8px;top:412.57px">0%</div><div class="a" style="left:621.0px;top:408px;width:47.2px;height:18px;background:#d5f0fd"></div><div class="c" style="right:615.5px;top:412.57px">1.4 MB</div><div class="a" style="left:669.2px;top:408px;width:47.8px;height:18px;background:#d5f0fd"></div><div class="c" style="right:566.8px;top:412.57px">0 MB/s</div><div class="a" style="left:718.0px;top:408px;width:47.8px;height:18px;background:#d5f0fd"></div><div class="c" style="right:518.0px;top:412.57px">0 Mbps</div><svg class="a" style="left:359.5px;top:412.78px" width="11" height="9" viewBox="0 0 11 9"><rect x="0.5" y="0.5" width="10" height="8" rx="1" fill="#f4f4f4" stroke="#8a8a8a" stroke-width="0.9"/><rect x="1" y="1" width="9" height="1.1" fill="#a8a8a8"/><rect x="3.4" y="2.9" width="4.4" height="4.5" fill="#1f6fdc"/><path d="M5.6 2.9 V7.4 M3.4 5.15 H7.8" stroke="#9cc4f2" stroke-width="0.5"/></svg><div class="nm" style="left:374.5px;top:412.28px">IAS Host</div><div class="a" style="left:572.2px;top:426px;width:47.8px;height:19px;background:#d5f0fd"></div><div class="c" style="right:663.8px;top:431.22px">0%</div><div class="a" style="left:621.0px;top:426px;width:47.2px;height:19px;background:#d5f0fd"></div><div class="c" style="right:615.5px;top:431.22px">13.7 MB</div><div class="a" style="left:669.2px;top:426px;width:47.8px;height:19px;background:#d5f0fd"></div><div class="c" style="right:566.8px;top:431.22px">0 MB/s</div><div class="a" style="left:718.0px;top:426px;width:47.8px;height:19px;background:#d5f0fd"></div><div class="c" style="right:518.0px;top:431.22px">0 Mbps</div><svg class="a" style="left:359.5px;top:431.43px" width="11" height="9" viewBox="0 0 11 9"><rect x="0.5" y="0.5" width="10" height="8" rx="1" fill="#f4f4f4" stroke="#8a8a8a" stroke-width="0.9"/><rect x="1" y="1" width="9" height="1.1" fill="#a8a8a8"/><rect x="3.4" y="2.9" width="4.4" height="4.5" fill="#1f6fdc"/><path d="M5.6 2.9 V7.4 M3.4 5.15 H7.8" stroke="#9cc4f2" stroke-width="0.5"/></svg><div class="nm" style="left:374.5px;top:430.93px">IIS Worker Process</div><div class="a" style="left:572.2px;top:445px;width:47.8px;height:19px;background:#d5f0fd"></div><div class="c" style="right:663.8px;top:449.87px">0%</div><div class="a" style="left:621.0px;top:445px;width:47.2px;height:19px;background:#d5f0fd"></div><div class="c" style="right:615.5px;top:449.87px">43.4 MB</div><div class="a" style="left:669.2px;top:445px;width:47.8px;height:19px;background:#d5f0fd"></div><div class="c" style="right:566.8px;top:449.87px">0 MB/s</div><div class="a" style="left:718.0px;top:445px;width:47.8px;height:19px;background:#d5f0fd"></div><div class="c" style="right:518.0px;top:449.87px">0 Mbps</div><svg class="a" style="left:359.5px;top:450.07px" width="11" height="9" viewBox="0 0 11 9"><rect x="0.5" y="0.5" width="10" height="8" rx="1" fill="#f4f4f4" stroke="#8a8a8a" stroke-width="0.9"/><rect x="1" y="1" width="9" height="1.1" fill="#a8a8a8"/><rect x="3.4" y="2.9" width="4.4" height="4.5" fill="#1f6fdc"/><path d="M5.6 2.9 V7.4 M3.4 5.15 H7.8" stroke="#9cc4f2" stroke-width="0.5"/></svg><div class="nm" style="left:374.5px;top:449.57px">IIS Worker Process</div><div class="a" style="left:572.2px;top:464px;width:47.8px;height:18px;background:#d5f0fd"></div><div class="c" style="right:663.8px;top:468.52px">0%</div><div class="a" style="left:621.0px;top:464px;width:47.2px;height:18px;background:#d5f0fd"></div><div class="c" style="right:615.5px;top:468.52px">6.5 MB</div><div class="a" style="left:669.2px;top:464px;width:47.8px;height:18px;background:#d5f0fd"></div><div class="c" style="right:566.8px;top:468.52px">0 MB/s</div><div class="a" style="left:718.0px;top:464px;width:47.8px;height:18px;background:#d5f0fd"></div><div class="c" style="right:518.0px;top:468.52px">0 Mbps</div><svg class="a" style="left:348px;top:469.62px" width="5" height="7" viewBox="0 0 5 7"><path d="M0.8 0.7 L3.8 3.5 L0.8 6.3" stroke="#6a6a6a" stroke-width="0.9" fill="none"/></svg><svg class="a" style="left:359.5px;top:468.72px" width="11" height="9" viewBox="0 0 11 9"><rect x="0.5" y="0.5" width="10" height="8" rx="1" fill="#f4f4f4" stroke="#8a8a8a" stroke-width="0.9"/><rect x="1" y="1" width="9" height="1.1" fill="#a8a8a8"/><rect x="3.4" y="2.9" width="4.4" height="4.5" fill="#1f6fdc"/><path d="M5.6 2.9 V7.4 M3.4 5.15 H7.8" stroke="#9cc4f2" stroke-width="0.5"/></svg><div class="nm" style="left:374.5px;top:468.22px">Internet Information Services</div><div class="a" style="left:572.2px;top:482px;width:47.8px;height:19px;background:#d5f0fd"></div><div class="c" style="right:663.8px;top:487.17px">0%</div><div class="a" style="left:621.0px;top:482px;width:47.2px;height:19px;background:#d5f0fd"></div><div class="c" style="right:615.5px;top:487.17px">2.8 MB</div><div class="a" style="left:669.2px;top:482px;width:47.8px;height:19px;background:#d5f0fd"></div><div class="c" style="right:566.8px;top:487.17px">0 MB/s</div><div class="a" style="left:718.0px;top:482px;width:47.8px;height:19px;background:#d5f0fd"></div><div class="c" style="right:518.0px;top:487.17px">0 Mbps</div><svg class="a" style="left:359.5px;top:487.38px" width="11" height="9" viewBox="0 0 11 9"><rect x="0.5" y="0.5" width="10" height="8" rx="1" fill="#f4f4f4" stroke="#8a8a8a" stroke-width="0.9"/><rect x="1" y="1" width="9" height="1.1" fill="#a8a8a8"/><rect x="3.4" y="2.9" width="4.4" height="4.5" fill="#1f6fdc"/><path d="M5.6 2.9 V7.4 M3.4 5.15 H7.8" stroke="#9cc4f2" stroke-width="0.5"/></svg><div class="nm" style="left:374.5px;top:486.88px">Microsoft (R) Aggregator Host</div><div class="a" style="left:572.2px;top:501px;width:47.8px;height:19px;background:#d5f0fd"></div><div class="c" style="right:663.8px;top:505.82px">0%</div><div class="a" style="left:621.0px;top:501px;width:47.2px;height:19px;background:#d5f0fd"></div><div class="c" style="right:615.5px;top:505.82px">1.8 MB</div><div class="a" style="left:669.2px;top:501px;width:47.8px;height:19px;background:#d5f0fd"></div><div class="c" style="right:566.8px;top:505.82px">0 MB/s</div><div class="a" style="left:718.0px;top:501px;width:47.8px;height:19px;background:#d5f0fd"></div><div class="c" style="right:518.0px;top:505.82px">0 Mbps</div><svg class="a" style="left:348px;top:506.92px" width="5" height="7" viewBox="0 0 5 7"><path d="M0.8 0.7 L3.8 3.5 L0.8 6.3" stroke="#6a6a6a" stroke-width="0.9" fill="none"/></svg><svg class="a" style="left:359.5px;top:505.42px" width="12" height="10" viewBox="0 0 12 10"><ellipse cx="6" cy="5" rx="5" ry="4.2" fill="none" stroke="#9aa7b5" stroke-width="0.6"/><path d="M4 1.5 L9.5 5 L2.5 8 Z" fill="none" stroke="#4d88c4" stroke-width="0.8"/><circle cx="4" cy="1.6" r="1.2" fill="#3d8fd8"/><circle cx="9.6" cy="5" r="1.2" fill="#2f7cc8"/><circle cx="2.5" cy="8" r="1.3" fill="#2d6fb8"/></svg><div class="nm" style="left:374.5px;top:505.52px">Microsoft Distributed Transact...</div><div class="a" style="left:572.2px;top:520px;width:47.8px;height:18px;background:#d5f0fd"></div><div class="c" style="right:663.8px;top:524.48px">0%</div><div class="a" style="left:621.0px;top:520px;width:47.2px;height:18px;background:#d5f0fd"></div><div class="c" style="right:615.5px;top:524.48px">1.7 MB</div><div class="a" style="left:669.2px;top:520px;width:47.8px;height:18px;background:#d5f0fd"></div><div class="c" style="right:566.8px;top:524.48px">0 MB/s</div><div class="a" style="left:718.0px;top:520px;width:47.8px;height:18px;background:#d5f0fd"></div><div class="c" style="right:518.0px;top:524.48px">0 Mbps</div><svg class="a" style="left:348px;top:525.58px" width="5" height="7" viewBox="0 0 5 7"><path d="M0.8 0.7 L3.8 3.5 L0.8 6.3" stroke="#6a6a6a" stroke-width="0.9" fill="none"/></svg><svg class="a" style="left:359.5px;top:524.68px" width="11" height="9" viewBox="0 0 11 9"><rect x="0.5" y="0.5" width="10" height="8" rx="1" fill="#f4f4f4" stroke="#8a8a8a" stroke-width="0.9"/><rect x="1" y="1" width="9" height="1.1" fill="#a8a8a8"/><rect x="3.4" y="2.9" width="4.4" height="4.5" fill="#1f6fdc"/><path d="M5.6 2.9 V7.4 M3.4 5.15 H7.8" stroke="#9cc4f2" stroke-width="0.5"/></svg><div class="nm" style="left:374.5px;top:524.18px">Microsoft Network Realtime I...</div><div class="a" style="left:572.2px;top:538px;width:47.8px;height:19px;background:#d5f0fd"></div><div class="c" style="right:663.8px;top:543.12px">0%</div><div class="a" style="left:621.0px;top:538px;width:47.2px;height:19px;background:#d5f0fd"></div><div class="c" style="right:615.5px;top:543.12px">3.9 MB</div><div class="a" style="left:669.2px;top:538px;width:47.8px;height:19px;background:#d5f0fd"></div><div class="c" style="right:566.8px;top:543.12px">0 MB/s</div><div class="a" style="left:718.0px;top:538px;width:47.8px;height:19px;background:#d5f0fd"></div><div class="c" style="right:518.0px;top:543.12px">0 Mbps</div><svg class="a" style="left:359.5px;top:543.33px" width="11" height="9" viewBox="0 0 11 9"><rect x="0.5" y="0.5" width="10" height="8" rx="1" fill="#f4f4f4" stroke="#8a8a8a" stroke-width="0.9"/><rect x="1" y="1" width="9" height="1.1" fill="#a8a8a8"/><rect x="3.4" y="2.9" width="4.4" height="4.5" fill="#1f6fdc"/><path d="M5.6 2.9 V7.4 M3.4 5.15 H7.8" stroke="#9cc4f2" stroke-width="0.5"/></svg><div class="nm" style="left:374.5px;top:542.83px">MoUSO Core Worker Process</div><div class="a" style="left:572.2px;top:557px;width:47.8px;height:19px;background:#d5f0fd"></div><div class="c" style="right:663.8px;top:561.77px">0%</div><div class="a" style="left:621.0px;top:557px;width:47.2px;height:19px;background:#d5f0fd"></div><div class="c" style="right:615.5px;top:561.77px">3.5 MB</div><div class="a" style="left:669.2px;top:557px;width:47.8px;height:19px;background:#d5f0fd"></div><div class="c" style="right:566.8px;top:561.77px">0 MB/s</div><div class="a" style="left:718.0px;top:557px;width:47.8px;height:19px;background:#d5f0fd"></div><div class="c" style="right:518.0px;top:561.77px">0 Mbps</div><svg class="a" style="left:348px;top:562.88px" width="5" height="7" viewBox="0 0 5 7"><path d="M0.8 0.7 L3.8 3.5 L0.8 6.3" stroke="#6a6a6a" stroke-width="0.9" fill="none"/></svg><svg class="a" style="left:359.5px;top:561.08px" width="11" height="11" viewBox="0 0 11 11"><circle cx="5.5" cy="5.5" r="5.2" fill="#141414"/><path d="M3 3 Q5.5 1.2 8.2 3 L7.3 6.5 L5 8 Q2.8 7 3 3 Z" fill="#e8701f"/><path d="M7 7 L10.5 10.5" stroke="#141414" stroke-width="1.6"/></svg><div class="nm" style="left:374.5px;top:561.48px">QEMU machine emulators an...</div><div class="a" style="left:572.2px;top:576px;width:47.8px;height:18px;background:#d5f0fd"></div><div class="c" style="right:663.8px;top:580.43px">0%</div><div class="a" style="left:621.0px;top:576px;width:47.2px;height:18px;background:#d5f0fd"></div><div class="c" style="right:615.5px;top:580.43px">2.2 MB</div><div class="a" style="left:669.2px;top:576px;width:47.8px;height:18px;background:#d5f0fd"></div><div class="c" style="right:566.8px;top:580.43px">0 MB/s</div><div class="a" style="left:718.0px;top:576px;width:47.8px;height:18px;background:#d5f0fd"></div><div class="c" style="right:518.0px;top:580.43px">0 Mbps</div><svg class="a" style="left:359.5px;top:580.63px" width="11" height="9" viewBox="0 0 11 9"><rect x="0.5" y="0.5" width="10" height="8" rx="1" fill="#f4f4f4" stroke="#8a8a8a" stroke-width="0.9"/><rect x="1" y="1" width="9" height="1.1" fill="#a8a8a8"/><rect x="3.4" y="2.9" width="4.4" height="4.5" fill="#1f6fdc"/><path d="M5.6 2.9 V7.4 M3.4 5.15 H7.8" stroke="#9cc4f2" stroke-width="0.5"/></svg><div class="nm" style="left:374.5px;top:580.13px">RDP Clipboard Monitor</div><div class="a" style="left:572.2px;top:594px;width:47.8px;height:19px;background:#d5f0fd"></div><div class="c" style="right:663.8px;top:599.07px">0%</div><div class="a" style="left:621.0px;top:594px;width:47.2px;height:19px;background:#d5f0fd"></div><div class="c" style="right:615.5px;top:599.07px">0.9 MB</div><div class="a" style="left:669.2px;top:594px;width:47.8px;height:19px;background:#d5f0fd"></div><div class="c" style="right:566.8px;top:599.07px">0 MB/s</div><div class="a" style="left:718.0px;top:594px;width:47.8px;height:19px;background:#d5f0fd"></div><div class="c" style="right:518.0px;top:599.07px">0 Mbps</div><svg class="a" style="left:359.5px;top:599.27px" width="11" height="9" viewBox="0 0 11 9"><rect x="0.5" y="0.5" width="10" height="8" rx="1" fill="#f4f4f4" stroke="#8a8a8a" stroke-width="0.9"/><rect x="1" y="1" width="9" height="1.1" fill="#a8a8a8"/><rect x="3.4" y="2.9" width="4.4" height="4.5" fill="#1f6fdc"/><path d="M5.6 2.9 V7.4 M3.4 5.15 H7.8" stroke="#9cc4f2" stroke-width="0.5"/></svg><div class="nm" style="left:374.5px;top:598.77px">RDP Session Input Handler</div><div class="a" style="left:1005px;top:170.5px;width:9px;height:435.5px;background:#efefef"></div><div class="a" style="left:1008.5px;top:181.7px;width:2.6px;height:73.3px;background:#8c8c8c;border-radius:1.3px"></div><div class="a" style="left:571.1px;top:131px;width:200.7px;height:42.7px;border:5.35px solid #a4272b"></div>
</div>
<div class="a" style="left:301px;top:608px;width:716px;height:1px;background:rgba(0,4,16,0.75)"></div>
<div class="a" style="left:0;top:690px;width:1280px;height:30px;background:#eeeeee;border-top:1px solid #f6f6f6"></div>
<!-- start -->
<svg class="a" style="left:499px;top:698.5px" width="16" height="16" viewBox="0 0 16 16">
 <defs><linearGradient id="wl" x1="0" y1="0" x2="1" y2="1"><stop offset="0" stop-color="#3ab8f4"/><stop offset="1" stop-color="#0a6cd6"/></linearGradient></defs>
 <rect x="0" y="0" width="7.4" height="7.4" fill="url(#wl)"/>
 <rect x="8.3" y="0" width="7.4" height="7.4" fill="url(#wl)"/>
 <rect x="0" y="8.1" width="7.4" height="7.4" fill="url(#wl)"/>
 <rect x="8.3" y="8.1" width="7.4" height="7.4" fill="url(#wl)"/>
</svg>
<!-- search -->
<div class="a" style="left:524px;top:696px;width:145px;height:20px;background:#fafafa;border:1px solid #e2e2e2;border-radius:10px"></div>
<svg class="a" style="left:530.5px;top:701.5px" width="11" height="10" viewBox="0 0 11 10">
 <circle cx="4.6" cy="4.3" r="3.4" fill="none" stroke="#1a1a1a" stroke-width="1.3"/>
 <path d="M7.1 6.8 L9.8 9.4" stroke="#1a1a1a" stroke-width="1.4"/>
</svg>
<div class="a" style="left:548px;top:700.6px;font-size:9px;line-height:11px;color:#5c5c5c;letter-spacing:-0.15px">Search</div>
<!-- task view -->
<svg class="a" style="left:678px;top:698.5px" width="16" height="15" viewBox="0 0 16 15">
 <rect x="5.5" y="0.5" width="10" height="10" fill="#f4f4f4" stroke="#dcdcdc" stroke-width="0.6"/>
 <rect x="4.5" y="3.5" width="8" height="7" fill="#b8b8b8"/>
 <path d="M0 3.5 H4.5 V10.5 H12.5 V14.5 H0 Z" fill="#1e1e1e"/>
</svg>
<!-- explorer -->
<svg class="a" style="left:707px;top:698.5px" width="17" height="15" viewBox="0 0 17 15">
 <path d="M0 1.5 Q0 0.5 1 0.5 H6 L7.5 2 H16 Q16.5 2 16.5 3 V14.5 H0 Z" fill="#f0b424"/>
 <rect x="0" y="3" width="16.5" height="11.5" fill="#fcd34a"/>
 <rect x="3" y="10" width="10.5" height="4.5" rx="1" fill="#1479d3"/>
</svg>
<!-- chartvps -->
<svg class="a" style="left:736.5px;top:698px" width="17" height="16" viewBox="0 0 17 16">
 <rect width="17" height="16" fill="#b0282a"/>
 <path d="M0.6 8 C3.1 -0.2 5.9 -0.2 8.5 8 C11.1 16.2 13.9 16.2 16.4 8" stroke="#fff" stroke-width="1.5" fill="none"/>
 <path d="M0.5 8 H16.5" stroke="#fff" stroke-width="1"/>
</svg>
<!-- task manager (active) -->
<div class="a" style="left:761.5px;top:693.5px;width:25px;height:26.5px;background:#f7f7f7;border-radius:4px;border:1px solid #f1f1f1"></div>
<svg class="a" style="left:766px;top:699.5px" width="16" height="13" viewBox="0 0 16 13">
 <rect width="16" height="13" rx="1" fill="#1565c8"/>
 <path d="M0 6.5 L2 6.5 L3.6 3.2 L5.6 7.8 L7.8 3.6 L9.8 7.6 L11.6 3.4 L13.4 7 L16 6.2 V13 H0 Z" fill="#7ccdf9"/>
 <rect y="8.5" width="16" height="4.5" fill="#b5e4fc"/>
</svg>
<div class="a" style="left:769px;top:716.8px;width:10.3px;height:2.5px;background:#1a5fd0;border-radius:1.5px"></div>
<!-- tray -->
<svg class="a" style="left:1143px;top:703px" width="9" height="6" viewBox="0 0 9 6"><path d="M0.8 5 L4.5 1.2 L8.2 5" stroke="#1a1a1a" stroke-width="1.1" fill="none"/></svg>
<div class="a" style="left:1164.8px;top:696.8px;font-size:7.7px;line-height:9px;color:#1a1a1a;letter-spacing:-0.2px">ENG</div>
<div class="a" style="left:1167.5px;top:707.3px;font-size:7.7px;line-height:9px;color:#1a1a1a;letter-spacing:-0.1px">US</div>
<svg class="a" style="left:1191.5px;top:700px" width="13" height="12" viewBox="0 0 13 12">
 <g fill="none" stroke="#1f1f1f" stroke-width="0.95">
  <path d="M7.5 1 H1.5 Q0.8 1 0.8 1.8 V8 Q0.8 8.8 1.5 8.8 H5"/>
  <path d="M5 8.8 V10.8 H9"/>
  <circle cx="10" cy="2.6" r="1.6"/>
  <path d="M10 4.2 V10.8"/>
 </g>
</svg>
<svg class="a" style="left:1208px;top:701px" width="13" height="10" viewBox="0 0 13 10">
 <g fill="none" stroke="#1f1f1f" stroke-width="0.95">
  <path d="M0.8 3.5 H3 L6 1 V9 L3 6.5 H0.8 Z"/>
  <path d="M7.8 3.2 Q8.8 5 7.8 6.8"/>
  <path d="M9.5 2 Q11.2 5 9.5 8"/>
  <path d="M11.2 1 Q13.3 5 11.2 9"/>
 </g>
</svg>
<div class="a" style="right:13px;top:696.2px;font-size:7.9px;line-height:9px;color:#1a1a1a;text-align:right;letter-spacing:-0.15px">1:01 PM</div>
<div class="a" style="right:12.8px;top:707.4px;font-size:8.4px;line-height:9px;color:#1a1a1a;text-align:right;letter-spacing:-0.1px">8/28/2025</div>

</body></html>
